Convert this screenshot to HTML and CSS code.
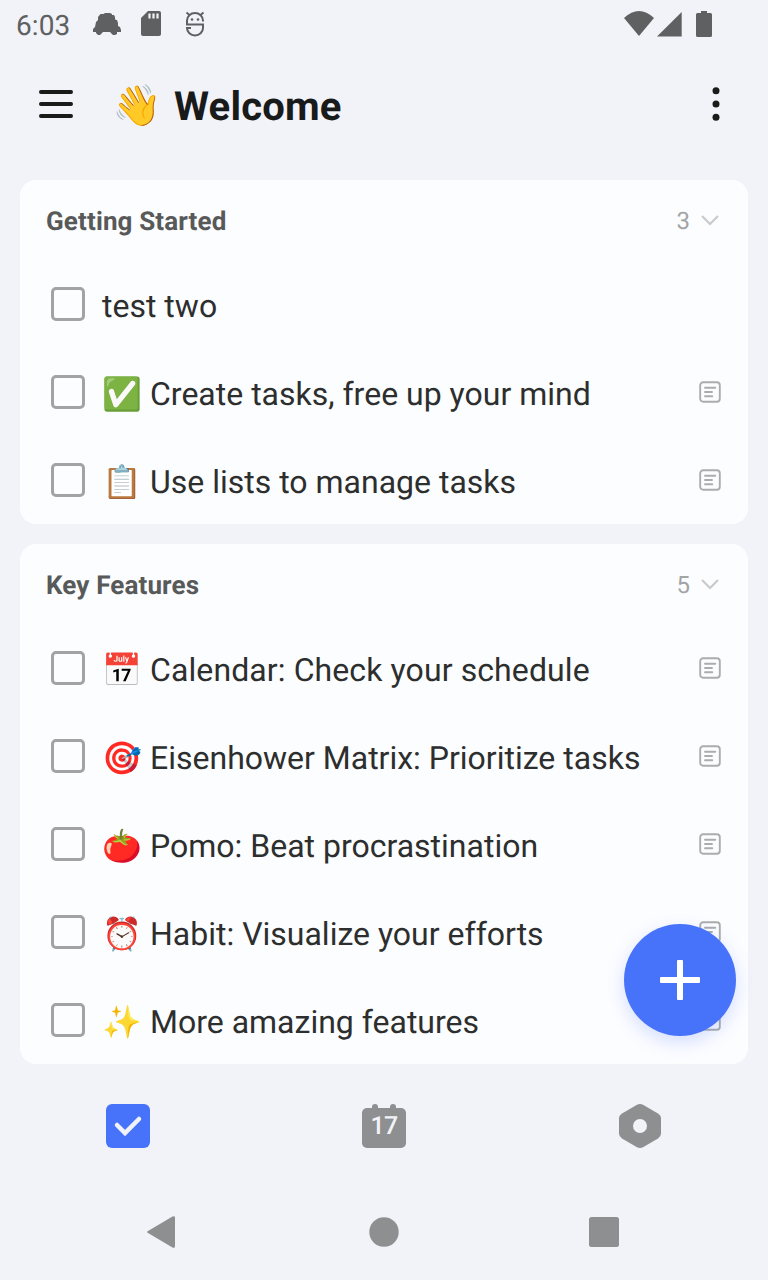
FILE: index.html
```html
<!DOCTYPE html>
<html lang="en">
<head>
<meta charset="utf-8">
<title>Welcome</title>
<link rel="stylesheet" href="styles.css">
</head>
<body>
<svg class="defs" width="0" height="0">
  <symbol id="note" viewBox="0 0 24 24"><rect x="2.200" y="2.200" width="19.600" height="19.600" rx="3" fill="none" stroke="#abadac" stroke-width="1.900"/><path d="M7 7.700h10.300M7 12h7M7 16.300h7.300" stroke="#abadac" stroke-width="1.900" stroke-linecap="round"/></symbol>
  <symbol id="chevron" viewBox="0 0 20 12"><path d="M2 2l8 8 8-8" fill="none" stroke="#c8c9ca" stroke-width="2"/></symbol>
</svg>
<div class="screen">
  <header class="status">
    <span class="clock">6:03</span>
    <svg class="st-car" width="28" height="24" viewBox="0 0 28 24"><path d="M7.500 2h3l1.500-1h5l2 1v1h2l1 2v2l1 1h1l1 3v3l2 1 1 3v2h-4v2l-2 1h-2l-3-3h-7l-3 3H5l-2-2v-1H0v-3l2-2 1-5 2-2V5z" fill="#5f6061"/></svg>
    <svg class="st-sd" width="20" height="26" viewBox="0 0 20 26"><path d="M7 0h11a2 2 0 0 1 2 2v21a2 2 0 0 1-2 2H2a2 2 0 0 1-2-2V7z" fill="#5f6061"/><path d="M8.500 2.500v5M12.500 2.500v5M16.500 2.500v5" stroke="#f2f3f9" stroke-width="2.200"/></svg>
    <svg class="st-bug" width="20" height="26" viewBox="0 0 20 26"><g fill="none" stroke="#5f6061" stroke-width="2"><path d="M18 10.500V9.500a8 7.500 0 0 0-16 0V13.500h16V17a8 7.500 0 0 1-16 0h4M1.500 1.500l3 2.500M18.500 1.500L15.500 4"/></g><circle cx="7" cy="8.500" r="1.300" fill="#5f6061"/><circle cx="13" cy="8.500" r="1.300" fill="#5f6061"/></svg>
    <svg class="st-right" width="88" height="26" viewBox="0 0 88 26"><g fill="#5f6061"><path d="M0 7Q15-7 30 7L15 25z"/><path d="M33 25.500L57.700 1v24.500z"/><path d="M77 0h6v2h3.500a1.500 1.500 0 0 1 1.500 1.500v21a1.500 1.500 0 0 1-1.500 1.500h-13a1.500 1.500 0 0 1-1.500-1.500v-21A1.500 1.500 0 0 1 73.500 2H77z"/></g></svg>
  </header>
  <div class="appbar">
    <svg width="34" height="30" viewBox="0 0 34 30"><path d="M1.900 3h30.200M1.900 15h30.200M1.900 27h30.200" stroke="#191a1a" stroke-width="3.800" stroke-linecap="round"/></svg>
    <h1 class="title"><span class="wave">👋</span><span>Welcome</span></h1>
    <svg width="8" height="36" viewBox="0 0 8 36"><g fill="#191a1a"><circle cx="4" cy="4.700" r="3.500"/><circle cx="4" cy="18" r="3.500"/><circle cx="4" cy="31.300" r="3.500"/></g></svg>
  </div>
  <main class="lists">
    <section class="card">
      <div class="card-head"><h2>Getting Started</h2><span class="count">3</span><svg class="chev"><use href="#chevron"/></svg></div>
      <div class="task"><i class="box"></i><span class="label">test two</span></div>
      <div class="task"><i class="box"></i><span class="emoji">✅</span><span class="label">Create tasks, free up your mind</span><svg class="note"><use href="#note"/></svg></div>
      <div class="task"><i class="box"></i><span class="emoji">📋</span><span class="label">Use lists to manage tasks</span><svg class="note"><use href="#note"/></svg></div>
    </section>
    <section class="card">
      <div class="card-head"><h2>Key Features</h2><span class="count">5</span><svg class="chev"><use href="#chevron"/></svg></div>
      <div class="task"><i class="box"></i><span class="emoji">📅</span><span class="label spaced">Calendar: Check your schedule</span><svg class="note"><use href="#note"/></svg></div>
      <div class="task"><i class="box"></i><span class="emoji">🎯</span><span class="label">Eisenhower Matrix: Prioritize tasks</span><svg class="note"><use href="#note"/></svg></div>
      <div class="task"><i class="box"></i><span class="emoji">🍅</span><span class="label">Pomo: Beat procrastination</span><svg class="note"><use href="#note"/></svg></div>
      <div class="task"><i class="box"></i><span class="emoji">⏰</span><span class="label">Habit: Visualize your efforts</span><svg class="note"><use href="#note"/></svg></div>
      <div class="task"><i class="box"></i><span class="emoji">✨</span><span class="label">More amazing features</span><svg class="note"><use href="#note"/></svg></div>
    </section>
  </main>
  <nav class="tabs">
    <svg width="44" height="44" viewBox="0 0 44 44"><rect width="44" height="44" rx="6" fill="#4772fa"/><path d="M11 21l8 8 14-14" fill="none" stroke="#f2f3f9" stroke-width="4.500" stroke-linecap="round"/></svg>
    <span class="cal-tab">17</span>
    <svg width="44" height="44" viewBox="0 0 44 44"><path d="M19 .8q3-1.600 6 0l15 8.700q3 1.900 3 5v15q0 3.100-3 5l-15 8.700q-3 1.600-6 0l-15-8.700q-3-1.900-3-5v-15q0-3.100 3-5z" fill="#8e8f90"/><circle cx="22" cy="22" r="7" fill="#f2f3f9"/></svg>
  </nav>
  <footer class="sysnav">
    <svg width="48" height="48" viewBox="0 0 48 48"><path d="M8 23Q6 24 8 25l24.500 14.500q2.500 1 2.500-1v-29q0-2-2.500-1z" fill="#8e8f90"/></svg>
    <svg width="48" height="48" viewBox="0 0 48 48"><circle cx="24" cy="24" r="14.700" fill="#8e8f90"/></svg>
    <svg width="48" height="48" viewBox="0 0 48 48"><rect x="9" y="9" width="30" height="30" rx="2.500" fill="#8e8f90"/></svg>
  </footer>
  <button class="fab" aria-label="Add task"><svg width="40" height="40" viewBox="0 0 40 40"><rect x="17" width="6" height="40" rx="1" fill="#fff"/><rect y="17" width="40" height="6" rx="1" fill="#fff"/></svg></button>
</div>
</body>
</html>
```
FILE: styles.css
```css
* { box-sizing: border-box; }
body { margin: 0; background: #f2f3f9; font-family: Roboto, "Noto Sans", sans-serif; text-rendering: geometricPrecision; }
h1, h2 { margin: 0; }
svg { flex: none; display: block; }
.defs { position: absolute; }
.screen { position: relative; width: 768px; height: 1280px; display: flex; flex-direction: column; overflow: hidden; }
.status { height: 48px; display: flex; align-items: center; padding: 0 56px 0 16px; color: #5f6061; }
.clock { font-size: 28px; letter-spacing: 0.1px; width: 77px; padding-top: 3px; }
.st-sd { margin-left: 20px; }
.st-bug { margin-left: 24px; }
.st-right { margin-left: auto; }
.appbar { height: 132px; padding: 0 48px 20px 39px; display: flex; align-items: center; }
.title { flex: 1; display: flex; align-items: center; margin-left: 39px; font-size: 40px; font-weight: 700; letter-spacing: 0.2px; color: #191a1a; padding-top: 4px; }
.wave { width: 62px; font-size: 40px; font-weight: 400; padding-bottom: 2px; }
.lists { padding: 0 20px; display: flex; flex-direction: column; gap: 20px; }
.card { background: #fcfdff; border-radius: 16px; }
.card-head { height: 80px; display: flex; align-items: center; padding: 2px 28px 0 26px; }
.card-head h2 { flex: 1; font-size: 26px; font-weight: 700; letter-spacing: 0.13px; color: #585959; padding-top: 2px; }
.count { font-size: 24px; color: #a3a4a5; }
.chev { width: 20px; height: 12px; margin: 0 0 2px 10px; }
.task { height: 88px; display: flex; align-items: center; padding: 0 26px 0 31px; }
.box { width: 34px; height: 34px; border: 3px solid #a3a3a3; border-radius: 5px; margin-right: 17px; flex: none; }
.label { flex: 1; font-size: 32px; color: #2d2e2e; white-space: nowrap; padding-top: 4px; }
.spaced { letter-spacing: 0.1px; }
.emoji { width: 48px; flex: none; font-size: 32px; padding-top: 4px; }
.note { width: 24px; height: 24px; }
.tabs { height: 120px; display: grid; grid-template-columns: repeat(3, 1fr); place-items: center; padding-top: 4px; }
.cal-tab { position: relative; width: 44px; height: 40px; margin-top: 4px; border-radius: 5px; background: #8e8f90; color: #f2f3f9; font-size: 25px; letter-spacing: -0.8px; font-weight: 500; line-height: 37px; text-align: center; }
.cal-tab::before, .cal-tab::after { content: ""; position: absolute; top: -4px; width: 6px; height: 8px; border-radius: 3px; background: #8e8f90; }
.cal-tab::before { left: 10px; }
.cal-tab::after { right: 10px; }
.sysnav { height: 96px; display: flex; align-items: center; justify-content: center; gap: 172px; }
.fab { position: absolute; left: 624px; top: 924px; width: 112px; height: 112px; border: 0; padding: 0; border-radius: 50%; background: #4772fa; display: flex; align-items: center; justify-content: center; box-shadow: 0 6px 18px rgba(71, 114, 250, 0.22); }
```
